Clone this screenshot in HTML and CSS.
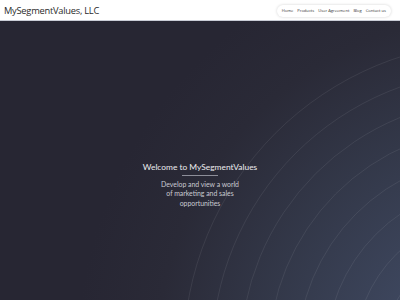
FILE: index.html
```html
<!DOCTYPE html>
<html>
<head>
    <title>MySegmentValues, LLC</title>
    <meta charset="UTF-8">
    <meta name="viewport" content="width=device-width, initial-scale=1.0">
<link rel="stylesheet" href="styles.css">
</head>
<body>

<div class="page">
    <header class="header">
        <h1 class="header-title">MySegmentValues, LLC</h1>
        <nav class="nav">
            <a href="#">Home</a>
            <a href="#">Products</a>
            <a href="#">User Agreement</a>
            <a href="#">Blog</a>
            <a href="#">Contact us</a>
        </nav>
    </header>

    <main class="hero">
        <svg class="hero-rings" width="400" height="279" viewBox="0 0 400 279">
            <g fill="none" stroke="rgba(255,255,255,.075)" stroke-width="1">
                <circle cx="497" cy="334" r="313.5"/>
                <circle cx="497" cy="334" r="285"/>
                <circle cx="497" cy="334" r="256.5"/>
                <circle cx="497" cy="334" r="228"/>
                <circle cx="497" cy="334" r="199.5"/>
                <circle cx="497" cy="334" r="171"/>
                <circle cx="497" cy="334" r="142.5"/>
                <circle cx="497" cy="334" r="114"/>
                <circle cx="497" cy="334" r="85.5"/>
                <circle cx="497" cy="334" r="57"/>
            </g>
        </svg>
        <div class="hero-content">
            <h2 class="hero-title">Welcome to MySegmentValues</h2>
            <p class="hero-text">Develop and view a world<br>of marketing and sales<br>opportunities</p>
        </div>
    </main>
</div>

</body>
</html>
```

FILE: styles.css
```css
/* base */
    body{
        padding:0;
        margin:0;
        background-color:#282733;
        font:normal 16px Lato, "Open Sans", sans-serif;
    }
    .page{
        display:flex;
        flex-direction:column;
        width:400px;
        height:300px;
        overflow:hidden;
    }
/* header */
    .header{
        display:flex;
        justify-content:space-between;
        align-items:center;
        height:20px;
        padding:0 9px 0 4px;
        background-color:#fff;
        border-bottom:1px solid #c9ccd6;
    }
    .header-title{
        margin:0;
        font:normal 9.3px "Open Sans", sans-serif;
        letter-spacing:-0.25px;
        color:#2b2b2b;
    }
    .nav{
        display:flex;
        align-items:center;
        gap:4px;
        height:12px;
        margin-top:1px;
        padding:0 5px;
        border-radius:6px;
        background-color:#fff;
        box-shadow:0 0 3px rgba(0,0,0,.18);
    }
    .nav a{
        font:normal 4.1px "Open Sans", sans-serif;
        color:#333;
        text-decoration:none;
    }
/* hero */
    .hero{
        flex:1;
        position:relative;
        overflow:hidden;
        background:radial-gradient(circle at 497px 334px, #4a5570 0, #3d465d 110px, #333849 230px, #2a2a37 340px, #272633 420px);
    }
    .hero-rings{
        position:absolute;
        top:0;
        left:0;
    }
    .hero-content{
        position:relative;
        display:flex;
        flex-direction:column;
        align-items:center;
        padding-top:141px;
        text-align:center;
    }
    .hero-title{
        margin:0;
        padding-bottom:4px;
        font-size:8.4px;
        font-weight:normal;
        color:#ececef;
    }
    .hero-title::after{
        content:"";
        display:block;
        width:36px;
        height:1px;
        margin:3px auto 0;
        background-color:#8d8e99;
    }
    .hero-text{
        margin:0;
        font-size:6.9px;
        line-height:9.4px;
        color:#c9cad2;
    }
```
